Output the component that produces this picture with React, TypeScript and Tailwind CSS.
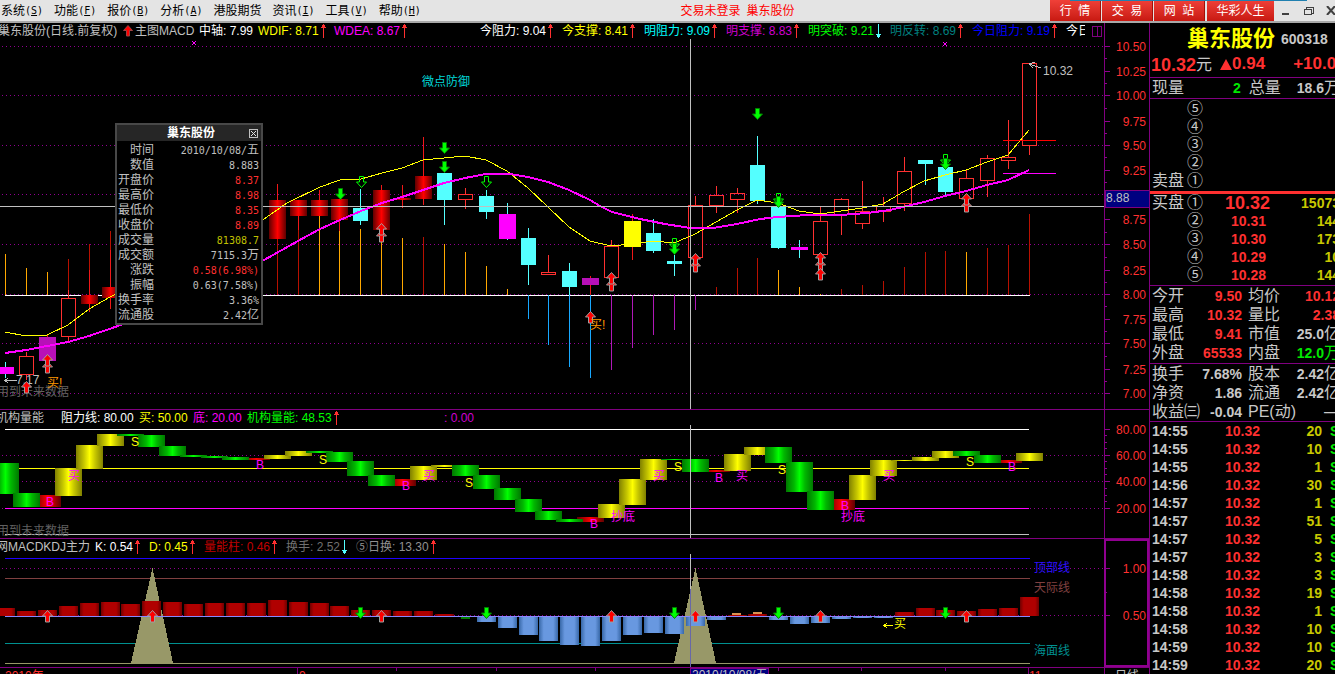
import React from "react";

const SANS = "font-['Liberation_Sans','Noto_Sans_CJK_SC',sans-serif]";
const MONO = "font-['DejaVu_Sans_Mono','Noto_Sans_CJK_SC',monospace]";

// kind: h hollow red, r shaded red, c cyan, m magenta, p purple, y yellow
// [kind, bodyTop, bodyBottom, wickTop, wickBottom]
type Candle = [string, number, number, number, number];

const CANDLES: (Candle | null)[] = [
  ["m", 367, 374, 362, 378],
  ["h", 356, 375, 352, 380],
  ["p", 337, 361, 335, 361],
  ["h", 298, 337, 290, 342],
  ["r", 295, 304, 270, 312],
  ["r", 287, 298, 250, 309],
  null,
  null,
  null,
  null,
  null,
  null,
  null,
  ["r", 200, 239, 184, 239],
  ["r", 200, 216, 200, 230],
  ["r", 200, 216, 190, 216],
  ["r", 199, 220, 199, 231],
  ["c", 208, 221, 189, 225],
  ["r", 190, 230, 185, 230],
  ["r", 198, 200, 185, 208],
  ["r", 176, 199, 137, 205],
  ["c", 173, 200, 173, 225],
  ["h", 194, 200, 188, 209],
  ["c", 196, 212, 190, 219],
  ["m", 214, 239, 203, 240],
  ["c", 238, 265, 228, 285],
  ["h", 272, 275, 255, 275],
  ["c", 271, 287, 263, 295],
  ["p", 278, 285, 276, 295],
  ["h", 246, 278, 240, 278],
  ["y", 221, 247, 214, 260],
  ["c", 233, 251, 219, 253],
  ["c", 261, 264, 255, 276],
  ["h", 205, 258, 196, 258],
  ["h", 195, 206, 186, 213],
  ["h", 193, 200, 188, 213],
  ["c", 165, 201, 136, 204],
  ["c", 207, 248, 207, 249],
  ["m", 247, 250, 240, 258],
  ["h", 221, 255, 207, 255],
  ["h", 199, 215, 198, 235],
  ["h", 211, 224, 181, 229],
  ["h", 206, 212, 197, 222],
  ["h", 171, 204, 157, 211],
  ["c", 160, 164, 160, 185],
  ["c", 167, 192, 167, 195],
  ["h", 178, 199, 170, 199],
  ["h", 158, 181, 155, 197],
  ["h", 157, 161, 120, 169],
  ["h", 63, 146, 63, 155],
];

// MACD sticks measured from the zero line: o orange, d dark red, b blue, v violet
const STICKS: [number, string, number][] = [
  [0, "o", 254], [1, "o", 268], [2, "o", 272], [3, "d", 259], [4, "d", 244], [5, "d", 231],
  [13, "d", 239], [14, "d", 216], [15, "o", 216], [16, "o", 231], [17, "o", 229], [18, "o", 236],
  [19, "o", 238], [20, "d", 237], [21, "o", 244], [22, "o", 252], [23, "o", 266], [24, "o", 289],
  [25, "b", 319], [26, "b", 345], [27, "b", 367], [28, "b", 378], [29, "v", 370], [30, "v", 348],
  [31, "v", 335], [32, "v", 330], [33, "v", 310], [34, "d", 287], [35, "d", 268], [36, "d", 258],
  [37, "o", 270], [38, "o", 287], [39, "o", 294], [40, "d", 289], [41, "d", 285], [42, "d", 281],
  [43, "d", 267], [44, "d", 252], [45, "d", 251], [46, "o", 252], [47, "d", 248], [48, "d", 245],
  [49, "d", 214],
];

// energy blocks: [kind, top, bottom]
const BLOCKS: [string, number, number][] = [
  ["g", 463, 494], ["g", 493, 507], ["r", 495, 507], ["y", 468, 496], ["y", 445, 469],
  ["y", 434, 446], ["g", 434, 436], ["g", 435, 447], ["g", 446, 456], ["g", 455, 457],
  ["g", 456, 458], ["g", 457, 460], ["r", 458, 460], ["y", 455, 459], ["y", 451, 456],
  ["g", 451, 453], ["g", 452, 462], ["g", 461, 476], ["g", 475, 486], ["r", 479, 486],
  ["y", 466, 480], ["y", 465, 467], ["g", 465, 476], ["g", 475, 489], ["g", 488, 500],
  ["g", 499, 512], ["g", 511, 520], ["g", 519, 522], ["r", 517, 522], ["y", 504, 518],
  ["y", 479, 505], ["y", 459, 480], ["g", 459, 460], ["g", 459, 472], ["r", 470, 472],
  ["y", 454, 471], ["y", 447, 455], ["g", 447, 463], ["g", 462, 492], ["g", 491, 510],
  ["r", 499, 510], ["y", 475, 500], ["y", 460, 476], ["y", 460, 461], ["y", 457, 461],
  ["y", 451, 458], ["g", 451, 456], ["g", 455, 463], ["r", 460, 463], ["y", 453, 461],
];

// end of each volume bar, zero line is at 616
const VOLUME = [
  608, 611, 610, 606, 603, 602, 604, 601, 602, 604, 603, 603, 603, 600, 602, 603, 606, 610, 610,
  611, 611, 614, 616, 622, 628, 635, 641, 645, 646, 641, 635, 633, 634, 626, 620, 615, 614, 620,
  624, 623, 619, 618, 618, 612, 608, 610, 611, 609, 608, 597,
];

const xAt = (i: number) => Math.floor(5.5 + i * 20.9);

const STICK_FILL: Record<string, string> = { o: "#ffa800", d: "#b81000", b: "#18a8ff", v: "#b018b8" };
const BODY_FILL: Record<string, string> = {
  r: "url(#redShade)",
  c: "#54ffff",
  m: "#ff00ff",
  p: "#b810b8",
  y: "#ffff00",
};

const YELLOW_LINE =
  "5,332 26,336 47,335 68,325 89,309 110,297 264,219 287,203 320,187 340,180 361,179 382,173 402,168 423,160 444,158 465,156 486,160 507,171 528,188 548,207 569,227 590,241 611,246 632,244 653,241 674,243 695,234 716,222 737,210 757,200 778,203 799,211 820,214 841,211 862,208 883,204 903,192 924,181 945,175 966,170 987,162 1008,155 1029,130";
const MAGENTA_LINE =
  "5,353 26,350 47,346 68,342 89,336 118,326 264,260 298,241 320,229 340,220 361,211 382,203 402,197 423,190 444,183 465,178 486,174 510,174 528,177 548,182 569,190 590,200 600,206 612,212 640,219 665,224 690,228 713,228 737,224 760,219 778,217 807,215 840,215 867,213 890,210 924,202 945,196 966,191 987,185 1008,180 1029,170";

interface PointProps {
  x: number;
  y: number;
}

const UpArrow = ({ x, y }: PointProps) => (
  <path
    d={`M${x + 0.5} ${y - 5.5}l5 5.5h-3v6h-4v-6h-3z`}
    fill="#ff0000"
    stroke="#a0a0a0"
    strokeWidth="1"
    shapeRendering="auto"
  />
);

const DownArrow = ({ x, y, hollow }: PointProps & { hollow?: boolean }) => (
  <path
    d={`M${x + 0.5} ${y + 5.5}l-5 -5.5h3v-5.5h4v5.5h3z`}
    fill={hollow ? "none" : "#00ff00"}
    stroke={hollow ? "#00ff00" : "#008000"}
    strokeWidth="1"
    shapeRendering="auto"
  />
);

const Label = ({ x, y, fill, children }: PointProps & { fill: string; children: React.ReactNode }) => (
  <text x={x} y={y + 4} fill={fill} fontSize="12">
    {children}
  </text>
);

const Grid = ({ rows }: { rows: number[] }) => (
  <>
    {rows.map((y) => (
      <line key={y} x1="2" x2="1104" y1={y + 0.5} y2={y + 0.5} stroke="#900090" strokeDasharray="1 3" />
    ))}
  </>
);

const Axis = ({ labels, ticks }: { labels: [string, number][]; ticks: number[] }) => (
  <>
    {labels.map(([text, y]) => (
      <g key={text}>
        <line x1="1105" x2="1110" y1={y + 0.5} y2={y + 0.5} stroke="#900090" />
        <text x="1146" y={y + 5} fill="#ff3030" fontSize="12" textAnchor="end">
          {text}
        </text>
      </g>
    ))}
    {ticks.map((y) => (
      <line key={y} x1="1105" x2="1107" y1={y + 0.5} y2={y + 0.5} stroke="#900090" />
    ))}
  </>
);

const Shades = () => (
  <defs>
    <linearGradient id="redShade">
      <stop offset="0" stopColor="#600000" />
      <stop offset="0.3" stopColor="#c00000" />
      <stop offset="0.5" stopColor="#ff0000" />
      <stop offset="0.7" stopColor="#c00000" />
      <stop offset="1" stopColor="#600000" />
    </linearGradient>
    <linearGradient id="greenShade">
      <stop offset="0" stopColor="#007800" />
      <stop offset="0.3" stopColor="#00b800" />
      <stop offset="0.5" stopColor="#00ff00" />
      <stop offset="0.7" stopColor="#00b800" />
      <stop offset="1" stopColor="#007800" />
    </linearGradient>
    <linearGradient id="yellowShade">
      <stop offset="0" stopColor="#808000" />
      <stop offset="0.3" stopColor="#c8c800" />
      <stop offset="0.5" stopColor="#ffff00" />
      <stop offset="0.7" stopColor="#c8c800" />
      <stop offset="1" stopColor="#808000" />
    </linearGradient>
    <linearGradient id="blueShade">
      <stop offset="0" stopColor="#3868a8" />
      <stop offset="0.25" stopColor="#6898e0" />
      <stop offset="0.75" stopColor="#6898e0" />
      <stop offset="1" stopColor="#3868a8" />
    </linearGradient>
    <linearGradient id="brickShade">
      <stop offset="0" stopColor="#700000" />
      <stop offset="0.2" stopColor="#b00000" />
      <stop offset="0.8" stopColor="#b00000" />
      <stop offset="1" stopColor="#700000" />
    </linearGradient>
  </defs>
);

const PriceChart = () => (
  <svg viewBox="0 39 1149 370" className="block w-full" shapeRendering="crispEdges">
    <Shades />
    <Grid rows={[46, 95, 145, 194, 244, 294, 343, 393]} />
    <line x1="5" x2="1030" y1="295.500" y2="295.500" stroke="#ffffff" />
    {STICKS.map(([i, kind, end]) => (
      <rect
        key={i}
        x={xAt(i)}
        y={Math.min(end, 295)}
        width="1"
        height={Math.abs(end - 295)}
        fill={STICK_FILL[kind]}
      />
    ))}
    {CANDLES.map((candle, i) => {
      if (!candle) return null;
      const [kind, top, bottom, high, low] = candle;
      const x = xAt(i);
      if (kind === "h") {
        return (
          <g key={i} stroke="#ff3030" fill="none">
            <path d={`M${x + 0.5} ${high}V${top}M${x + 0.5} ${bottom}V${low}`} />
            <rect x={x - 6.5} y={top + 0.5} width="14" height={bottom - top - 1} />
          </g>
        );
      }
      const wide = kind !== "c";
      return (
        <g key={i}>
          <rect x={x} y={high} width="1" height={low - high} fill={kind === "c" || kind === "m" ? "#54ffff" : "#f01818"} />
          <rect
            x={wide ? x - 8 : x - 7}
            y={top}
            width={wide ? 17 : 15}
            height={bottom - top}
            fill={BODY_FILL[kind]}
          />
        </g>
      );
    })}
    <polyline points={YELLOW_LINE} fill="none" stroke="#ffff00" />
    <polyline points={MAGENTA_LINE} fill="none" stroke="#ff00ff" strokeWidth="2" />
    <rect x="1003" y="140" width="53" height="1" fill="#ff0000" />
    <rect x="1003" y="173" width="53" height="1" fill="#ff00ff" />
    <rect x="0" y="206" width="1105" height="1" fill="#c0c0c0" />
    <rect x="690" y="39" width="1" height="370" fill="#c0c0c0" />

    <DownArrow x={361} y={182} hollow />
    <DownArrow x={486} y={182} hollow />
    <DownArrow x={778} y={199} hollow />
    <DownArrow x={674} y={244} hollow />
    <DownArrow x={945} y={160} hollow />
    <DownArrow x={340} y={194} />
    <DownArrow x={444} y={148} />
    <DownArrow x={444} y={167} />
    <DownArrow x={757} y={114} />
    <DownArrow x={778} y={202} />
    <DownArrow x={674} y={249} />
    <DownArrow x={945} y={164} />

    <UpArrow x={47} y={367} />
    <UpArrow x={47} y={360} />
    <UpArrow x={381} y={236} />
    <UpArrow x={381} y={229} />
    <UpArrow x={611} y={285} />
    <UpArrow x={611} y={278} />
    <UpArrow x={695} y={266} />
    <UpArrow x={695} y={259} />
    <UpArrow x={820} y={265} />
    <UpArrow x={820} y={258} />
    <UpArrow x={820} y={274} />
    <UpArrow x={966} y={206} />
    <UpArrow x={966} y={199} />
    <UpArrow x={590} y={317} />

    <path d="M192 41l4 4M196 41l-4 4M943 42l4 4M947 42l-4 4" stroke="#ff00ff" />
    <path d="M1041 68l-12 -4M1029 64l6 -2M1029 64l4 4" stroke="#c0c0c0" fill="none" />
    <path d="M17 380.500H5M8 378l-3 2.500l3 2.500" stroke="#c0c0c0" fill="none" />
    <Label x={1043} y={71} fill="#c0c0c0">10.32</Label>
    <Label x={16} y={380} fill="#c0c0c0">7.17</Label>
    <Label x={-3} y={392} fill="#606060">用到未来数据</Label>
    <Label x={422} y={82} fill="#00d8d8">微点防御</Label>
    <Label x={47} y={383} fill="#ff9800">买!</Label>
    <Label x={590} y={325} fill="#ff9800">买!</Label>
    <UpArrow x={26} y={387} />

    <rect x="1104" y="39" width="1" height="370" fill="#800080" />
    <Axis
      labels={[
        ["10.50", 46], ["10.25", 71], ["10.00", 95], ["9.75", 121], ["9.50", 145], ["9.25", 170],
        ["8.75", 219], ["8.50", 244], ["8.25", 270], ["8.00", 294], ["7.75", 319], ["7.50", 343],
        ["7.25", 369], ["7.00", 393],
      ]}
      ticks={[58, 83, 108, 133, 157, 182, 232, 257, 282, 306, 331, 356, 381]}
    />
    <rect x="1105" y="190" width="44" height="17" fill="#000080" stroke="#800080" />
    <text x="1106" y="202" fill="#c0c0c0" fontSize="12">8.88</text>
  </svg>
);

const EnergyChart = () => {
  const fills: Record<string, string> = { r: "url(#redShade)", y: "url(#yellowShade)", g: "url(#greenShade)" };
  return (
    <svg viewBox="0 425 1149 113" className="block w-full" shapeRendering="crispEdges">
      <Grid rows={[455, 481, 508]} />
      <rect x="5" y="429" width="1024" height="1" fill="#ffffff" />
      <rect x="5" y="468" width="1024" height="1" fill="#ffff00" />
      <rect x="5" y="508" width="1024" height="1" fill="#ff00ff" />
      <rect x="5" y="534" width="1024" height="1" fill="#c0c0c0" />
      {["r", "y", "g"].map((kind) =>
        BLOCKS.map(([k, top, bottom], i) =>
          k === kind ? (
            <rect key={i} x={xAt(i) - 13} y={top} width="27" height={bottom - top} fill={fills[k]} />
          ) : null
        )
      )}
      <rect x="690" y="425" width="1" height="113" fill="#c0c0c0" />
      {[[131, 442], [319, 460], [465, 483], [674, 467], [778, 470], [966, 462]].map(([x, y]) => (
        <Label key={x} x={x} y={y} fill="#ffff00">S</Label>
      ))}
      {[[46, 502], [256, 465], [402, 486], [590, 524], [715, 478], [841, 506], [1008, 467]].map(([x, y]) => (
        <Label key={x} x={x} y={y} fill="#ff00ff">B</Label>
      ))}
      {[68, 423, 653, 736, 883].map((x) => (
        <Label key={x} x={x} y={476} fill="#ff00ff">买</Label>
      ))}
      <Label x={611} y={517} fill="#ff00ff">抄底</Label>
      <Label x={841} y={517} fill="#ff00ff">抄底</Label>
      <Label x={-3} y={531} fill="#606060">用到未来数据</Label>
      <rect x="1104" y="425" width="1" height="113" fill="#800080" />
      <Axis
        labels={[["80.00", 429], ["60.00", 455], ["40.00", 481], ["20.00", 508]]}
        ticks={[435, 442, 448, 461, 468, 474, 488, 495, 501]}
      />
    </svg>
  );
};

const KdjChart = () => (
  <svg viewBox="0 554 1149 113" className="block w-full" shapeRendering="crispEdges">
    <Grid rows={[568, 615]} />
    <rect x="5" y="558" width="1025" height="1" fill="#2000ff" />
    <rect x="5" y="578" width="1025" height="1" fill="#804040" />
    <rect x="5" y="643" width="1025" height="1" fill="#009090" />
    <rect x="5" y="663" width="1025" height="1" fill="#989868" />
    <path d="M152.500 568L173 663H131zM695.500 568L716 663H674z" fill="#989868" />
    {VOLUME.map((end, i) => (
      <rect
        key={i}
        x={xAt(i) - 9}
        y={Math.min(end, 616)}
        width="19"
        height={Math.abs(end - 616)}
        fill={end > 616 ? "url(#blueShade)" : "url(#brickShade)"}
      />
    ))}
    <rect x="461" y="617" width="9" height="2" fill="#008000" />
    <rect x="732" y="613" width="9" height="2" fill="#d89050" />
    <rect x="753" y="612" width="9" height="2" fill="#d89050" />
    <rect x="5" y="616" width="1025" height="1" fill="#8888ff" />
    <rect x="690" y="554" width="1" height="35" fill="#c0c0c0" />
    <rect x="690" y="589" width="1" height="78" fill="#6868a8" />
    {[47, 152, 381, 611, 695, 820, 966].map((x) => (
      <UpArrow key={x} x={x} y={616} />
    ))}
    {[360, 486, 674, 778, 945].map((x) => (
      <DownArrow key={x} x={x} y={613} />
    ))}
    <Label x={1034} y={568} fill="#3010ff">顶部线</Label>
    <Label x={1034} y={588} fill="#804040">天际线</Label>
    <Label x={1034} y={651} fill="#009090">海面线</Label>
    <path d="M893 625.500H884M887 623l-3 2.500l3 2.500" stroke="#ffff00" fill="none" />
    <Label x={894} y={624} fill="#ffff00">买</Label>
    <Axis labels={[["1.00", 568], ["0.50", 615]]} ticks={[592]} />
    <path d="M1105 554V666H1148V554" fill="none" stroke="#900090" strokeWidth="2" />
  </svg>
);

const DateAxis = () => (
  <svg viewBox="0 667 1149 18" className="block w-full" shapeRendering="crispEdges">
    <rect x="0" y="667" width="1149" height="1" fill="#800080" />
    <rect x="297" y="667" width="1" height="18" fill="#800080" />
    {[396, 496, 595, 778, 861, 945].map((x) => (
      <rect key={x} x={x} y="667" width="1" height="4" fill="#800080" />
    ))}
    <rect x="1028" y="667" width="1" height="18" fill="#800080" />
    <rect x="1104" y="667" width="1" height="18" fill="#800080" />
    <rect x="690" y="668" width="78" height="17" fill="#000080" stroke="#800080" />
    <text x="5" y="680" fill="#ff3030" fontSize="12">2010年</text>
    <text x="299" y="680" fill="#ff3030" fontSize="12">9</text>
    <text x="692" y="679" fill="#c0c0c0" fontSize="12">2010/10/08/五</text>
    <text x="1029" y="680" fill="#ff3030" fontSize="12">11</text>
    <text x="1115" y="680" fill="#c0c0c0" fontSize="12">日线</text>
  </svg>
);

const Trend = ({ down }: { down?: boolean }) => (
  <svg width="5" height="14" viewBox="0 0 5 14" className={down ? "ml-0.5 shrink-0 rotate-180" : "ml-0.5 shrink-0"} shapeRendering="crispEdges">
    <path d="M2 0h1v14h-1zM1 1h3v2h-3zM0 3h5v1h-5z" fill={down ? "#54ffff" : "#ff3030"} />
  </svg>
);

interface ReadingProps {
  text: string;
  className: string;
  trend?: "up" | "down";
}

const Reading = ({ text, className, trend }: ReadingProps) => (
  <span className={`flex shrink-0 items-center whitespace-nowrap ${className}`}>
    {text}
    {trend && <Trend down={trend === "down"} />}
  </span>
);

const PriceLegend = () => (
  <div className="flex h-4 items-center">
    <div className="flex h-4 min-w-0 flex-1 items-center overflow-hidden">
      <Reading text="巢东股份(日线.前复权)" className="-ml-0.5 w-[125px] text-[#c0c0c0]" />
      <svg width="10" height="12" viewBox="0 0 10 12" className="shrink-0">
        <path d="M5 0.500l4.500 5h-3v5.500h-3v-5.500h-3z" fill="#ff0000" stroke="#a04040" />
      </svg>
      <Reading text="主图MACD" className="ml-0.5 w-16 text-[#c0c0c0]" />
      <Reading text="中轴: 7.99" className="w-[59px] text-white" />
      <Reading text="WDIF: 8.71" trend="up" className="w-[76px] text-[#ffff00]" />
      <Reading text="WDEA: 8.67" trend="up" className="w-[146px] text-[#ff00ff]" />
      <Reading text="今阻力: 9.04" trend="up" className="w-[82px] text-white" />
      <Reading text="今支撑: 8.41" trend="up" className="w-[82px] text-[#ffff00]" />
      <Reading text="明阻力: 9.09" trend="up" className="w-[82px] text-[#00ffff]" />
      <Reading text="明支撑: 8.83" trend="up" className="w-[82px] text-[#d000d0]" />
      <Reading text="明突破: 9.21" trend="down" className="w-[82px] text-[#00ff00]" />
      <Reading text="明反转: 8.69" trend="up" className="w-[82px] text-[#008080]" />
      <Reading text="今日阻力: 9.19" trend="up" className="w-[94px] text-[#0000ff]" />
      <span className="w-[19px] shrink-0 overflow-hidden whitespace-nowrap text-white">今日</span>
      <button aria-label="分栏" className="ml-[7px] flex h-[11px] w-2.5 shrink-0 border border-[#800080]">
        <span className="ml-1 h-full border-l border-[#800080]" />
      </button>
    </div>
    <div className="h-4 w-[45px] border-l border-[#800080]" />
  </div>
);

const EnergyLegend = () => (
  <div className="flex h-4 items-center border-t border-[#800080]">
    <div className="flex h-4 min-w-0 flex-1 items-center overflow-hidden">
      <Reading text="机构量能" className="-ml-1 w-[65px] text-[#c0c0c0]" />
      <Reading text="阻力线: 80.00" className="w-[78px] text-white" />
      <Reading text="买: 50.00" className="w-[54px] text-[#ffff00]" />
      <Reading text="底: 20.00" className="w-[54px] text-[#ff00ff]" />
      <Reading text="机构量能: 48.53" trend="up" className="w-[197px] text-[#00ff00]" />
      <Reading text=": 0.00" className="text-[#d000d0]" />
    </div>
    <div className="h-4 w-[45px] border-l border-[#800080]" />
  </div>
);

const KdjLegend = () => (
  <div className="flex h-4 items-center border-t border-[#800080]">
    <div className="flex h-4 min-w-0 flex-1 items-center overflow-hidden">
      <Reading text="网MACDKDJ主力" className="-ml-1 w-[99px] text-[#c0c0c0]" />
      <Reading text="K: 0.54" trend="up" className="w-[54px] text-white" />
      <Reading text="D: 0.45" trend="up" className="w-[55px] text-[#ffff00]" />
      <Reading text="量能柱: 0.46" trend="up" className="w-[82px] text-[#c00000]" />
      <Reading text="换手: 2.52" trend="down" className="w-[70px] text-[#707070]" />
      <Reading text="⑤日换: 13.30" trend="up" className="text-[#909090]" />
    </div>
    <div className="h-4 w-[45px] border-2 border-b-0 border-[#900090]" />
  </div>
);

const DETAILS: [string, string, string, string][] = [
  ["时间", "2010/10/08/", "五", "text-[#c0c0c0]"],
  ["数值", "8.883", "", "text-[#c0c0c0]"],
  ["开盘价", "8.37", "", "text-[#ff3030]"],
  ["最高价", "8.98", "", "text-[#ff3030]"],
  ["最低价", "8.35", "", "text-[#ff3030]"],
  ["收盘价", "8.89", "", "text-[#ff3030]"],
  ["成交量", "81308.7", "", "text-[#c0c000]"],
  ["成交额", "7115.3", "万", "text-[#c0c0c0]"],
  ["涨跌", "0.58(6.98%)", "", "text-[#ff3030]"],
  ["振幅", "0.63(7.58%)", "", "text-[#c0c0c0]"],
  ["换手率", "3.36%", "", "text-[#c0c0c0]"],
  ["流通股", "2.42", "亿", "text-[#c0c0c0]"],
];

const DetailPopup = () => (
  <section className="absolute top-[100px] left-[115px] w-[148px] border-2 border-[#484848] bg-black">
    <header className="flex h-4 items-center bg-[#262626]">
      <h2 className="flex-1 pl-4 text-center text-xs leading-4 font-bold text-white">巢东股份</h2>
      <button aria-label="关闭" className="mr-[3px] grid size-[9px] place-items-center border border-[#c0c0c0]">
        <svg width="5" height="5" viewBox="0 0 5 5">
          <path d="M0 0l5 5M5 0l-5 5" stroke="#e0e0e0" />
        </svg>
      </button>
    </header>
    <table className="mt-0.5 w-full">
      <tbody>
        {DETAILS.map(([label, value, unit, color]) => (
          <tr key={label} className="h-[15px]">
            <th scope="row" className="w-[37px] p-0 text-right text-xs leading-[15px] font-normal whitespace-nowrap text-[#c0c0c0]">
              {label}
            </th>
            <td className={`p-0 pr-0.5 text-right leading-[15px] whitespace-nowrap ${color}`}>
              <span className={`text-[10px] leading-[15px] ${MONO}`}>{value}</span>
              <span className="text-xs leading-[15px]">{unit}</span>
            </td>
          </tr>
        ))}
      </tbody>
    </table>
  </section>
);

const MENU: [string, string][] = [
  ["系统", "S"],
  ["功能", "F"],
  ["报价", "B"],
  ["分析", "A"],
  ["港股期货", ""],
  ["资讯", "I"],
  ["工具", "V"],
  ["帮助", "H"],
];

const TitleBar = () => (
  <header className="relative flex h-[23px] shrink-0 items-stretch border-b-2 border-[#a8a8a8] bg-[#e4e4e4] text-xs text-black">
    <nav className="flex items-center gap-[11px] pl-px">
      {MENU.map(([name, key]) => (
        <button key={name} className="flex items-center whitespace-nowrap">
          {name}
          {key && (
            <span className={`text-[10px] ${MONO}`}>
              (<u>{key}</u>)
            </span>
          )}
        </button>
      ))}
    </nav>
    <p className="flex flex-1 items-center justify-center gap-1.5 pl-1 whitespace-nowrap text-[#ff0000]">
      <span>交易未登录</span>
      <span>巢东股份</span>
    </p>
    <div className="flex gap-px text-white">
      {["行  情", "交  易", "网  站"].map((tab) => (
        <button key={tab} className="w-[51px] border-r border-[#a01008] bg-linear-to-b from-[#f04038] to-[#c81810] whitespace-pre">
          {tab}
        </button>
      ))}
      <button className="ml-px w-[67px] bg-linear-to-b from-[#f04038] to-[#c81810]">华彩人生</button>
    </div>
    <div className="flex w-[61px] items-center overflow-hidden pl-2">
      <button aria-label="最小化" className="shrink-0">
        <svg width="8" height="10" viewBox="0 0 8 10">
          <path d="M0 7h7v2h-7z" fill="#404040" />
        </svg>
      </button>
      <button aria-label="还原" className="ml-3.5 shrink-0">
        <svg width="10" height="8" viewBox="0 0 10 8" shapeRendering="crispEdges">
          <path d="M2 2V0.500H9V6H7M0.500 2H7V7.500H0.500z" fill="none" stroke="#404040" />
        </svg>
      </button>
      <button aria-label="关闭窗口" className="ml-3 shrink-0">
        <svg width="10" height="9" viewBox="0 0 10 9">
          <path d="M1 0l8 9M9 0l-8 9" stroke="#404040" strokeWidth="2" />
        </svg>
      </button>
    </div>
    <span className="absolute top-0 right-7 h-px w-[237px] bg-[#2080b0]" />
  </header>
);

interface StatProps {
  left: [string, string, string];
  right: [string, string, string, string];
}

const STATS: StatProps[] = [
  { left: ["今开", "9.50", "text-[#ff3030]"], right: ["均价", "10.12", "", "text-[#ff3030]"] },
  { left: ["最高", "10.32", "text-[#ff3030]"], right: ["量比", "2.38", "", "text-[#ff3030]"] },
  { left: ["最低", "9.41", "text-[#ff3030]"], right: ["市值", "25.0", "亿", "text-[#c8c8c8]"] },
  { left: ["外盘", "65533", "text-[#ff3030]"], right: ["内盘", "12.0", "万", "text-[#00e800]"] },
];

const RATIOS: StatProps[] = [
  { left: ["换手", "7.68%", "text-[#c8c8c8]"], right: ["股本", "2.42", "亿", "text-[#c8c8c8]"] },
  { left: ["净资", "1.86", "text-[#c8c8c8]"], right: ["流通", "2.42", "亿", "text-[#c8c8c8]"] },
  { left: ["收益㈢", "-0.04", "text-[#c8c8c8]"], right: ["PE(动)", "", "—", "text-[#c8c8c8]"] },
];

const StatRow = ({ left, right }: StatProps) => (
  <div className="flex h-[19px] w-[190px] items-center whitespace-nowrap">
    <span className="w-8 shrink-0 pl-0.5 text-base">{left[0]}</span>
    <span className={`w-[60px] shrink-0 text-right text-sm font-bold ${left[2]}`}>{left[1]}</span>
    <span className="ml-1.5 text-base">{right[0]}</span>
    <span className={`flex flex-1 items-center justify-end ${right[3]}`}>
      <b className="text-sm">{right[1]}</b>
      <span className="text-base">{right[2]}</span>
    </span>
  </div>
);

const BIDS: [string, string, string][] = [
  ["①", "10.32", "15073"],
  ["②", "10.31", "144"],
  ["③", "10.30", "173"],
  ["④", "10.29", "10"],
  ["⑤", "10.28", "144"],
];

const TICKS: [string, string][] = [
  ["14:55", "20"],
  ["14:55", "10"],
  ["14:55", "1"],
  ["14:56", "30"],
  ["14:57", "1"],
  ["14:57", "51"],
  ["14:57", "5"],
  ["14:57", "3"],
  ["14:58", "3"],
  ["14:58", "19"],
  ["14:58", "1"],
  ["14:58", "10"],
  ["14:59", "10"],
  ["14:59", "20"],
];

const QuotePanel = () => (
  <aside className="w-[186px] shrink-0 overflow-hidden border-l border-[#800080] text-[#c8c8c8]">
    <div className="flex h-[27px] items-center pt-1 pl-[37px] whitespace-nowrap">
      <h1 className="text-[22px] leading-none font-bold text-[#ffff00]">巢东股份</h1>
      <span className="ml-1.5 text-sm font-bold">600318</span>
    </div>
    <div className="flex h-7 items-center border-b border-[#800080] pt-0.5 pl-px font-bold whitespace-nowrap text-[#ff3030]">
      <span className="text-lg">10.32</span>
      <span className="text-base font-normal text-[#c8c8c8]">元</span>
      <svg width="12" height="11" viewBox="0 0 12 11" className="ml-2 shrink-0">
        <path d="M6 0L12 11H0z" fill="#ff3030" />
      </svg>
      <span className="text-[17px]">0.94</span>
      <span className="ml-7 text-[17px]">+10.0</span>
    </div>
    <div className="flex h-[21px] w-[190px] items-center border-b border-[#800080] whitespace-nowrap">
      <span className="pl-0.5 text-base">现量</span>
      <b className="flex-1 text-right text-sm text-[#00e800]">2</b>
      <span className="ml-2 text-base">总量</span>
      <b className="ml-4 text-sm">18.6</b>
      <span className="text-base">万</span>
    </div>
    <table className="mt-px mb-px table-fixed">
      <tbody>
        {["⑤", "④", "③", "②", "①"].map((level) => (
          <tr key={level} className="h-[18px] text-base leading-[18px]">
            <th scope="row" className="w-[37px] p-0 pl-0.5 text-left font-normal whitespace-nowrap">
              {level === "①" ? "卖盘" : ""}
            </th>
            <td className="p-0">{level}</td>
          </tr>
        ))}
      </tbody>
    </table>
    <table className="w-[190px] table-fixed border-t-[3px] border-[#ff3030]">
      <tbody>
        {BIDS.map(([level, price, amount]) => (
          <tr key={level} className="h-[18px] text-base leading-[18px]">
            <th scope="row" className="w-[37px] p-0 pl-0.5 text-left font-normal whitespace-nowrap">
              {level === "①" ? "买盘" : ""}
            </th>
            <td className="w-5 p-0">{level}</td>
            <td className="w-[63px] p-0 font-bold text-[#ff3030]">
              {level === "①" ? (
                <span className="block pl-[18px] text-lg leading-[18px]">{price}</span>
              ) : (
                <span className="block pl-6 text-sm leading-[18px]">{price}</span>
              )}
            </td>
            <td className="p-0 text-right text-sm leading-[18px] font-bold text-[#c8c800]">{amount}</td>
          </tr>
        ))}
      </tbody>
    </table>
    <div className="mt-px border-t border-[#800080] pb-px">
      {STATS.map((row) => (
        <StatRow key={row.left[0]} {...row} />
      ))}
    </div>
    <div className="border-y border-[#800080]">
      {RATIOS.map((row) => (
        <StatRow key={row.left[0]} {...row} />
      ))}
    </div>
    <table className="w-[190px] table-fixed text-sm leading-[18px] font-bold">
      <tbody>
        {TICKS.map(([time, amount], i) => (
          <tr key={i} className="h-[18px]">
            <td className="w-[50px] p-0 pl-0.5">{time}</td>
            <td className="w-[60px] p-0 text-right text-[#ff3030]">10.32</td>
            <td className="w-[62px] p-0 text-right text-[#c8c800]">{amount}</td>
            <td className="p-0 pl-2 text-[#00e800]">S</td>
          </tr>
        ))}
      </tbody>
    </table>
  </aside>
);

const App = () => {
  return (
    <div className={`flex h-screen flex-col overflow-hidden bg-black text-xs ${SANS}`}>
      <TitleBar />
      <div className="flex min-h-0 flex-1">
        <main className="relative min-w-0 flex-1 overflow-hidden">
          <PriceLegend />
          <PriceChart />
          <EnergyLegend />
          <EnergyChart />
          <KdjLegend />
          <KdjChart />
          <DateAxis />
          <DetailPopup />
        </main>
        <QuotePanel />
      </div>
    </div>
  );
};

export default App;
